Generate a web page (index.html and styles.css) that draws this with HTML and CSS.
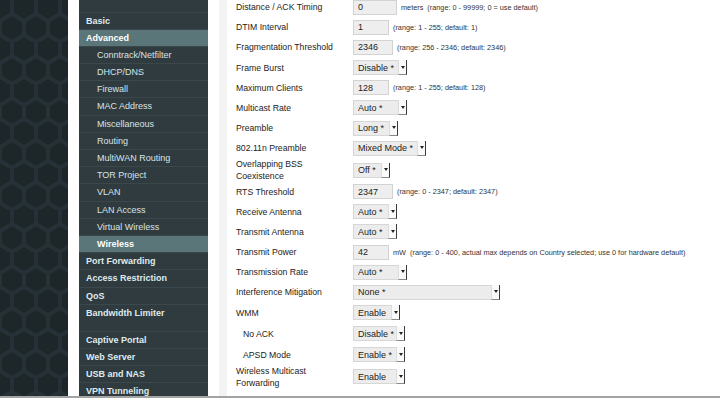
FILE: index.html
```html
<!DOCTYPE html>
<html lang="en">
<head>
    <meta charset="UTF-8">
    <meta name="viewport" content="width=device-width, initial-scale=1.0">
    <title>Advanced: Wireless</title>
    <link rel="stylesheet" href="styles.css">
</head>
<body>
    <div class="page">
        <div class="backdrop">
            <svg width="68" height="396" aria-hidden="true">
                <defs>
                    <pattern id="blocks" width="24" height="42" patternUnits="userSpaceOnUse">
                        <rect width="24" height="42" fill="#1d2628"/>
                        <path d="M12 0V14M12 14L0 21M12 14L24 21M0 21V35M24 21V35M0 35L12 42M24 35L12 42" stroke="#253136" stroke-width="4" fill="none"/>
                    </pattern>
                </defs>
                <rect width="68" height="396" fill="url(#blocks)"/>
            </svg>
        </div>

        <div class="container">
            <!-- Menu -->
            <nav class="sidebar">
                <a class="main" href="#">Basic</a>
                <a class="main active" href="#">Advanced</a>
                <a class="sub" href="#">Conntrack/Netfilter</a>
                <a class="sub" href="#">DHCP/DNS</a>
                <a class="sub" href="#">Firewall</a>
                <a class="sub" href="#">MAC Address</a>
                <a class="sub" href="#">Miscellaneous</a>
                <a class="sub" href="#">Routing</a>
                <a class="sub" href="#">MultiWAN Routing</a>
                <a class="sub" href="#">TOR Project</a>
                <a class="sub" href="#">VLAN</a>
                <a class="sub" href="#">LAN Access</a>
                <a class="sub" href="#">Virtual Wireless</a>
                <a class="sub active" href="#">Wireless</a>
                <a class="main" href="#">Port Forwarding</a>
                <a class="main" href="#">Access Restriction</a>
                <a class="main" href="#">QoS</a>
                <a class="main" href="#">Bandwidth Limiter</a>
                <a class="main gap" href="#">Captive Portal</a>
                <a class="main" href="#">Web Server</a>
                <a class="main" href="#">USB and NAS</a>
                <a class="main" href="#">VPN Tunneling</a>
            </nav>

            <!-- Wireless settings -->
            <div class="content">
                <div class="fields">
                    <div class="row">
                        <label>Distance / ACK Timing</label>
                        <div class="ctl"><input class="txt w44" value="0"><span class="hint">meters&nbsp;&nbsp;(range: 0 - 99999; 0 = use default)</span></div>
                    </div>
                    <div class="row">
                        <label>DTIM Interval</label>
                        <div class="ctl"><input class="txt w36" value="1"><span class="hint">(range: 1 - 255; default: 1)</span></div>
                    </div>
                    <div class="row">
                        <label>Fragmentation Threshold</label>
                        <div class="ctl"><input class="txt w40" value="2346"><span class="hint">(range: 256 - 2346; default: 2346)</span></div>
                    </div>
                    <div class="row">
                        <label>Frame Burst</label>
                        <div class="ctl"><span class="sel w54"><select><option>Disable *</option></select><i class="caret"></i></span></div>
                    </div>
                    <div class="row">
                        <label>Maximum Clients</label>
                        <div class="ctl"><input class="txt w36" value="128"><span class="hint">(range: 1 - 255; default: 128)</span></div>
                    </div>
                    <div class="row">
                        <label>Multicast Rate</label>
                        <div class="ctl"><span class="sel w54"><select><option>Auto *</option></select><i class="caret"></i></span></div>
                    </div>
                    <div class="row">
                        <label>Preamble</label>
                        <div class="ctl"><span class="sel w45"><select><option>Long *</option></select><i class="caret"></i></span></div>
                    </div>
                    <div class="row">
                        <label>802.11n Preamble</label>
                        <div class="ctl"><span class="sel w73"><select><option>Mixed Mode *</option></select><i class="caret"></i></span></div>
                    </div>
                    <div class="row tall">
                        <label>Overlapping BSS<br>Coexistence</label>
                        <div class="ctl"><span class="sel w37"><select><option>Off *</option></select><i class="caret"></i></span></div>
                    </div>
                    <div class="row">
                        <label>RTS Threshold</label>
                        <div class="ctl"><input class="txt w40" value="2347"><span class="hint">(range: 0 - 2347; default: 2347)</span></div>
                    </div>
                    <div class="row">
                        <label>Receive Antenna</label>
                        <div class="ctl"><span class="sel w44"><select><option>Auto *</option></select><i class="caret"></i></span></div>
                    </div>
                    <div class="row">
                        <label>Transmit Antenna</label>
                        <div class="ctl"><span class="sel w44"><select><option>Auto *</option></select><i class="caret"></i></span></div>
                    </div>
                    <div class="row">
                        <label>Transmit Power</label>
                        <div class="ctl"><input class="txt w36" value="42"><span class="hint">mW&nbsp;&nbsp;(range: 0 - 400, actual max depends on Country selected; use 0 for hardware default)</span></div>
                    </div>
                    <div class="row">
                        <label>Transmission Rate</label>
                        <div class="ctl"><span class="sel w54"><select><option>Auto *</option></select><i class="caret"></i></span></div>
                    </div>
                    <div class="row">
                        <label>Interference Mitigation</label>
                        <div class="ctl"><span class="sel w147"><select><option>None *</option></select><i class="caret"></i></span></div>
                    </div>
                    <div class="row">
                        <label>WMM</label>
                        <div class="ctl"><span class="sel w47"><select><option>Enable</option></select><i class="caret"></i></span></div>
                    </div>
                    <div class="row sub-row">
                        <label class="indent">No ACK</label>
                        <div class="ctl"><span class="sel w52"><select><option>Disable *</option></select><i class="caret"></i></span></div>
                    </div>
                    <div class="row">
                        <label class="indent">APSD Mode</label>
                        <div class="ctl"><span class="sel w52"><select><option>Enable *</option></select><i class="caret"></i></span></div>
                    </div>
                    <div class="row tall">
                        <label>Wireless Multicast<br>Forwarding</label>
                        <div class="ctl"><span class="sel w52"><select><option>Enable</option></select><i class="caret"></i></span></div>
                    </div>
                </div>
            </div>
        </div>
    </div>
    <div class="status-line"></div>
</body>
</html>
```

FILE: styles.css
```css
html, body {
    margin: 0;
    height: 100%;
}

body {
    font-family: 'Liberation Sans', Arial, sans-serif;
    display: flex;
    flex-direction: column;
    overflow: hidden;
    background: #1d2628;
}

.page {
    flex: 1;
    display: flex;
    min-height: 0;
}

.status-line {
    height: 2px;
    background: #a3a3a3;
}

.backdrop {
    width: 68px;
    flex-shrink: 0;
}

.backdrop svg {
    display: block;
}

.container {
    flex: 1;
    display: flex;
    background: #ffffff;
    padding-left: 11px;
}

/* Menu */
.sidebar {
    width: 129px;
    flex-shrink: 0;
    background: #2f3b3f;
    padding-top: 11.5px;
}

.sidebar a {
    display: block;
    box-sizing: border-box;
    height: 17.2px;
    line-height: 16px;
    border-top: 1px solid #3a474b;
    color: #d9e4e7;
    text-decoration: none;
    font-size: 9px;
    white-space: nowrap;
}

.sidebar .main {
    padding-left: 7px;
    font-weight: bold;
    color: #dfeaee;
}

.sidebar .sub {
    padding-left: 18px;
}

.sidebar .sub.active {
    font-weight: bold;
}

.sidebar .active {
    background: #5b7678;
    color: #ffffff;
}

.sidebar .gap {
    margin-top: 10px;
}

/* Settings */
.content {
    flex: 1;
    margin-left: 11px;
    border-left: 8px solid #f3f3f3;
    padding-left: 9px;
    overflow: hidden;
}

.fields {
    margin-top: -3.1px;
}

.row {
    display: grid;
    grid-template-columns: 117px auto;
    align-items: center;
    height: 20.2px;
}

.row.sub-row {
    height: 22px;
}

.row.tall {
    height: 23px;
}

.row label {
    font-size: 8.7px;
    line-height: 12px;
    color: #1c1c1c;
    white-space: nowrap;
}

.row label.indent {
    padding-left: 7px;
}

.ctl {
    display: flex;
    align-items: center;
    white-space: nowrap;
}

.txt {
    box-sizing: border-box;
    height: 15px;
    margin: 0;
    padding: 0 4px;
    border: 1px solid #d3d3d3;
    background: #eeeeee;
    font-family: inherit;
    font-size: 9px;
    color: #222;
}

.hint {
    margin-left: 4px;
    font-size: 7.3px;
    color: #333333;
}

.sel {
    box-sizing: border-box;
    display: inline-flex;
    height: 15px;
    border: 1px solid #d6d6d6;
    border-right: 0;
    background: #ececec;
}

.sel select {
    flex: 1;
    min-width: 0;
    -webkit-appearance: none;
    appearance: none;
    border: 0;
    margin: 0;
    padding: 0 0 0 4px;
    background: transparent;
    font-family: inherit;
    font-size: 9px;
    color: #222;
    outline: none;
}

.caret {
    width: 9px;
    flex-shrink: 0;
    box-sizing: border-box;
    display: flex;
    align-items: center;
    justify-content: center;
    background: #fafafa;
    border-left: 1px solid #dcdcdc;
    border-right: 1px solid #3a3a3a;
    margin-top: -1px;
    margin-bottom: -1px;
    border-bottom: 1px solid #8a8a8a;
}

.caret::before {
    content: '';
    border-top: 3px solid #222;
    border-left: 2px solid transparent;
    border-right: 2px solid transparent;
}

.w36 { width: 36px; }
.w37 { width: 37px; }
.w40 { width: 40px; }
.w44 { width: 44px; }
.w45 { width: 45px; }
.w47 { width: 47px; }
.w52 { width: 52px; }
.w54 { width: 54px; }
.w73 { width: 73px; }
.w147 { width: 147px; }
```
